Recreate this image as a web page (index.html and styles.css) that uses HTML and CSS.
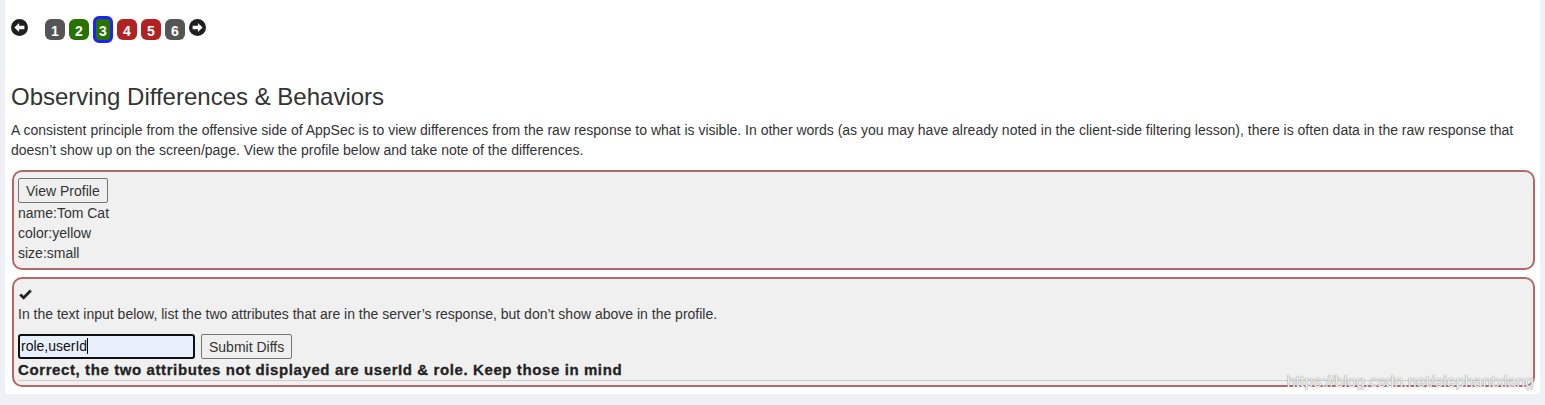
FILE: index.html
```html
<!DOCTYPE html>
<html>
<head>
<meta charset="utf-8">
<link rel="stylesheet" href="styles.css">
</head>
<body>
<div class="page">
  <div class="nav">
    <svg class="arrow" width="17" height="17" viewBox="0 0 16 16"><circle cx="8" cy="8" r="8" fill="#1f1f1f"/><path d="M3.2 8 L7.6 3.8 L7.6 6.3 L12.6 6.3 L12.6 9.7 L7.6 9.7 L7.6 12.2 Z" fill="#fff"/></svg>
    <div class="pages">
      <span class="pg gray">1</span>
      <span class="pg green">2</span>
      <span class="pg green cur">3</span>
      <span class="pg red">4</span>
      <span class="pg red">5</span>
      <span class="pg gray">6</span>
    </div>
    <svg class="arrow" width="17" height="17" viewBox="0 0 16 16"><circle cx="8" cy="8" r="8" fill="#1f1f1f"/><path d="M12.8 8 L8.4 3.8 L8.4 6.3 L3.4 6.3 L3.4 9.7 L8.4 9.7 L8.4 12.2 Z" fill="#fff"/></svg>
  </div>
  <h2 class="title">Observing Differences &amp; Behaviors</h2>
  <p class="intro">A consistent principle from the offensive side of AppSec is to view differences from the raw response to what is visible. In other words (as you may have already noted in the client-side filtering lesson), there is often data in the raw response that doesn’t show up on the screen/page. View the profile below and take note of the differences.</p>
  <div class="box box1">
    <button class="btn">View Profile</button>
    <div class="line">name:Tom Cat</div>
    <div class="line">color:yellow</div>
    <div class="line">size:small</div>
  </div>
  <div class="box box2">
    <div class="check"><svg width="13" height="11" viewBox="0 0 13 11"><path d="M1.2 5.6 L4.6 8.8 L11.8 1.6" fill="none" stroke="#222" stroke-width="2.8"/></svg></div>
    <div class="line">In the text input below, list the two attributes that are in the server’s response, but don’t show above in the profile.</div>
    <div class="form">
      <div class="input">role,userId<span class="caret"></span></div>
      <button class="btn">Submit Diffs</button>
    </div>
    <div class="feedback">Correct, the two attributes not displayed are userId &amp; role. Keep those in mind</div>
    <div class="rule"></div>
  </div>
  <div class="watermark">https://blog.csdn.net/elephantxiang</div>
</div>
</body>
</html>
```
FILE: styles.css
```css
html, body {
  margin: 0;
  padding: 0;
}
body {
  background: #f0f1f6;
  font-family: "Liberation Sans", Arial, sans-serif;
  color: #333;
  font-size: 14px;
}
.page {
  position: relative;
  margin-left: 5px;
  width: 1535px;
  height: 394px;
  background: #fff;
  border-radius: 0 0 4px 4px;
  box-sizing: border-box;
  padding: 0 5px 0 6px;
}
.nav {
  display: flex;
  align-items: center;
  padding-top: 19px;
  height: 21px;
}
.arrow {
  display: block;
  margin-top: -4px;
}
.pages {
  display: flex;
  align-items: center;
  gap: 4px;
  margin: 0 4px 0 17px;
}
.pg {
  width: 20px;
  height: 21px;
  border-radius: 6px;
  color: #fff;
  font-weight: bold;
  font-size: 14px;
  display: flex;
  align-items: center;
  justify-content: center;
  box-sizing: border-box;
  padding-top: 2px;
}
.gray { background: #555; }
.green { background: #267300; }
.red { background: #b22222; }
.cur {
  border: 3px solid #2020ff;
  height: 27px;
  border-radius: 6px;
}
.title {
  font-size: 24px;
  font-weight: normal;
  line-height: 26px;
  margin: 44px 0 10px;
  color: #333;
}
.intro {
  margin: 0 0 10px;
  line-height: 20px;
}
.box {
  margin-left: 1px;
  border: 2px solid #b06868;
  border-radius: 10px;
  background: #f0f0f0;
  padding: 6px 4px 5px 4px;
}
.box1 {
  margin-bottom: 7px;
}
.box2 {
  padding-top: 5px;
  padding-bottom: 4px;
}
.line {
  line-height: 20px;
}
.check {
  height: 20px;
  display: flex;
  align-items: center;
  padding-left: 1px;
}
.btn {
  font-family: "Liberation Sans", Arial, sans-serif;
  font-size: 14px;
  color: #333;
  background: #efefef;
  border: 1px solid #767676;
  border-radius: 2px;
  height: 25px;
  padding: 0 7px;
  margin: 0;
}
.form {
  display: flex;
  gap: 6px;
  margin-top: 10px;
}
.input {
  width: 177px;
  height: 25px;
  box-sizing: border-box;
  border: 2px solid #101010;
  border-radius: 3px;
  background: #e8f0fe;
  color: #111;
  padding: 0 1px;
  line-height: 21px;
  font-size: 14px;
}
.caret {
  display: inline-block;
  width: 1px;
  height: 16px;
  background: #000;
  vertical-align: -3px;
}
.feedback {
  font-weight: bold;
  font-size: 15px;
  line-height: 21px;
  color: #222;
  letter-spacing: 0.6px;
  -webkit-text-stroke: 0.3px #222;
}
.rule {
  height: 1px;
  background: #ccc;
  margin-right: 6px;
}
.watermark {
  position: absolute;
  right: 6px;
  top: 373px;
  font-size: 16px;
  color: rgba(255,255,255,0.85);
  text-shadow: 0 0 1px #999, 0 0 1px #999;
}
```
